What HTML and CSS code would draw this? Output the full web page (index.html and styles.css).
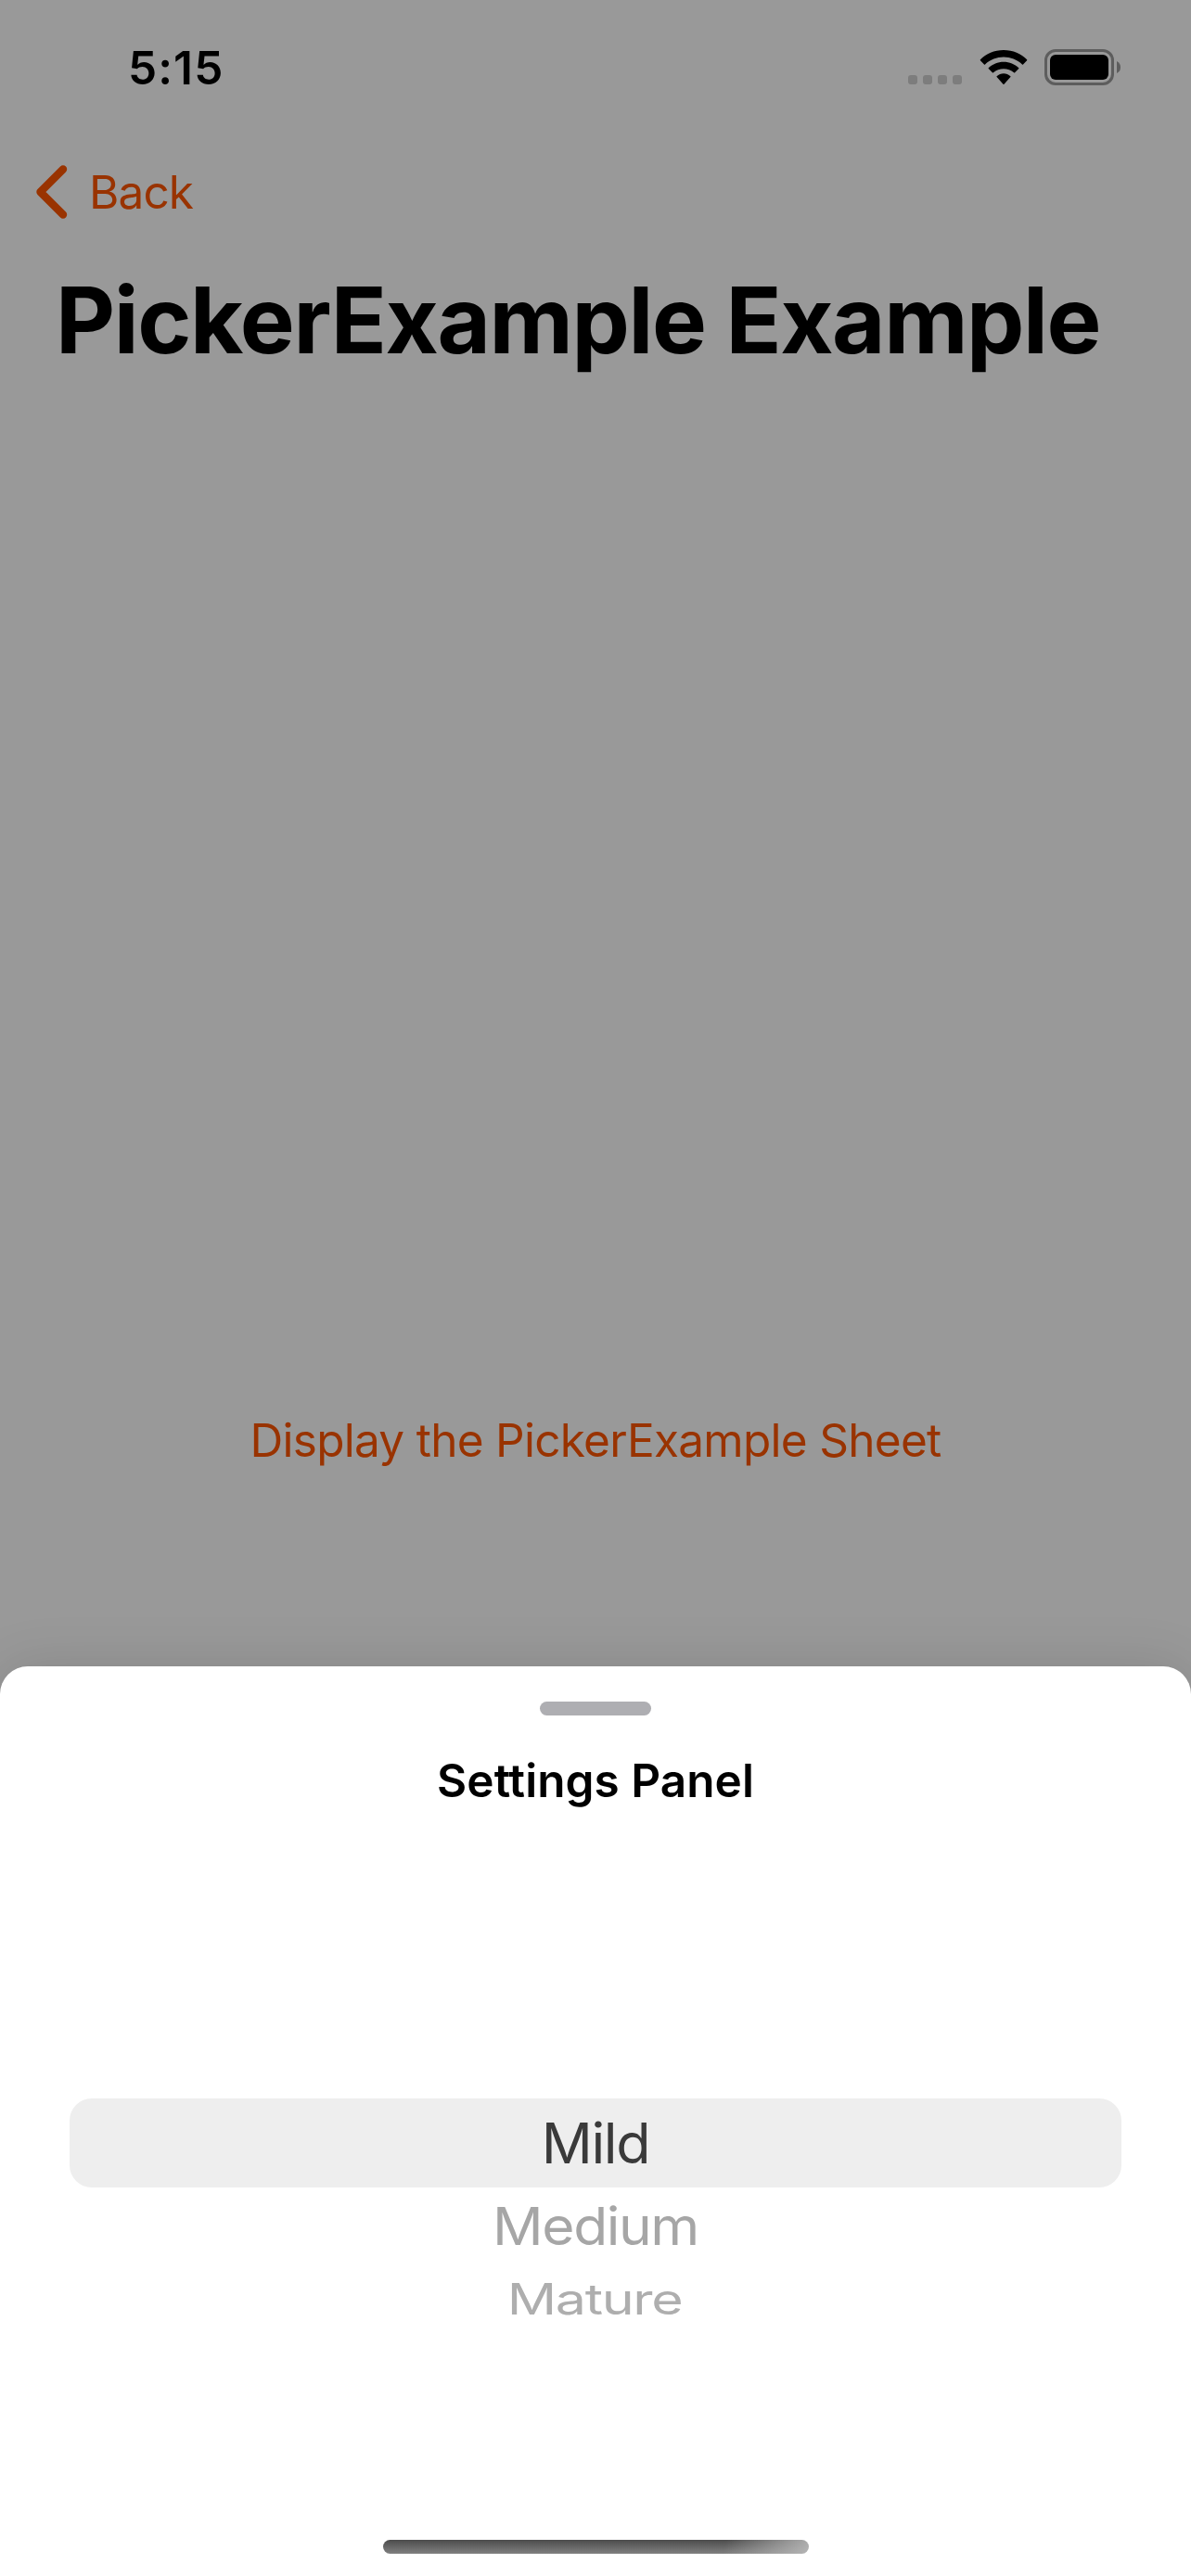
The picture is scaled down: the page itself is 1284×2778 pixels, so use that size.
FILE: index.html
```html
<!DOCTYPE html>
<html lang="en">
<head>
<meta charset="utf-8">
<title>PickerExample Example</title>
<link rel="stylesheet" href="styles.css">
</head>
<body>
<div class="screen">
  <header class="status-bar">
    <span class="time">5:15</span>
    <div class="indicators">
      <div class="signal"><i></i><i></i><i></i><i></i></div>
      <svg class="wifi" width="52" height="38" viewBox="0 0 52 38">
        <path d="M26 0C36 0 45 4 51.100 10.300Q51.500 10.700 51.100 11.200L47 15.400Q46.500 15.900 46 15.400C40.500 10.500 33.500 7.600 26 7.600S11.500 10.500 6 15.400Q5.500 15.900 5 15.400L.900 11.200Q.500 10.700 .900 10.300C7 4 16 0 26 0Z"/>
        <path d="M26 12.700C32.300 12.700 38 15.100 42.300 19.200Q42.700 19.600 42.300 20.100L38.100 24.300Q37.600 24.700 37.100 24.300C34 21.700 30.200 20.300 26 20.300S18 21.700 14.900 24.300Q14.400 24.700 13.900 24.300L9.700 20.100Q9.300 19.600 9.700 19.200C14 15.100 19.700 12.700 26 12.700Z"/>
        <path d="M26 25.300C28.700 25.300 31.300 26.300 33.400 28.200Q33.800 28.600 33.400 29L26.500 36.700Q26 37.200 25.500 36.700L18.600 29Q18.200 28.600 18.600 28.200C20.700 26.300 23.300 25.300 26 25.300Z"/>
      </svg>
      <svg class="battery" width="83" height="39" viewBox="0 0 83 39">
        <rect x="1.500" y="1.500" width="72" height="36" rx="10.500" fill="none" stroke="#5d5d5d" stroke-width="3"/>
        <rect x="6" y="6" width="63" height="27" rx="6"/>
        <path d="M78 13Q82 15 82 19.500T78 26Z" fill="#5d5d5d"/>
      </svg>
    </div>
  </header>
  <nav class="nav-bar">
    <svg class="chevron" width="34" height="58" viewBox="0 0 34 58">
      <path d="M29 4.500L4.500 29L29 53.500" fill="none" stroke="#993300" stroke-width="8.400" stroke-linecap="round" stroke-linejoin="round"/>
    </svg>
    <span class="back">Back</span>
  </nav>
  <h1 class="title">PickerExample Example</h1>
  <main class="content">
    <a class="open-sheet">Display the PickerExample Sheet</a>
  </main>
  <section class="sheet">
    <div class="grabber"></div>
    <h2 class="sheet-title">Settings Panel</h2>
    <div class="picker">
      <div class="option selected">Mild</div>
      <div class="option near">Medium</div>
      <div class="option far">Mature</div>
    </div>
    <div class="home-indicator"></div>
  </section>
</div>
</body>
</html>
```
FILE: styles.css
```css
* { box-sizing: border-box; margin: 0; padding: 0; }

body {
  background: #999;
  color: #000;
  font: 400 49.5px/60px Inter, "Liberation Sans", sans-serif;
}

.screen {
  width: 1284px;
  height: 2778px;
  display: flex;
  flex-direction: column;
  overflow: hidden;
}

.status-bar {
  height: 141px;
  padding: 43px 75px 0 138px;
  display: flex;
  justify-content: space-between;
  align-items: flex-start;
}

.time { font-weight: 600; letter-spacing: 1.1px; }

.indicators { display: flex; align-items: flex-start; padding-top: 10px; }

.signal { display: flex; gap: 6px; padding-top: 28px; margin-right: 18.5px; }
.signal i { width: 10px; height: 10px; border-radius: 3px; background: #7d7d7d; }

.wifi { margin: 1px 18.5px 0 0; }

.nav-bar {
  height: 144px;
  padding: 36px 39px 0;
  display: flex;
  align-items: flex-start;
  gap: 23px;
  color: #930;
}

.chevron { margin-top: 1px; }
.back { letter-spacing: -.9px; }

.title {
  padding-left: 60px;
  font-size: 99px;
  line-height: 120px;
  font-weight: 700;
  letter-spacing: -1.4px;
  white-space: nowrap;
}

.content {
  height: 1392px;
  padding-bottom: 214px;
  display: flex;
  justify-content: center;
  align-items: flex-end;
}

.open-sheet { color: #930; letter-spacing: -.72px; }

.sheet {
  height: 981px;
  padding: 38px 75px 24px;
  display: flex;
  flex-direction: column;
  align-items: center;
  background: #fff;
  border-radius: 30px 30px 0 0;
  box-shadow: 0 0 60px rgba(0, 0, 0, .12);
}

.grabber { width: 120px; height: 15px; border-radius: 8px; background: #aeaeb2; }

.sheet-title {
  margin-top: 40px;
  font-size: 49.5px;
  font-weight: 600;
  letter-spacing: .05px;
}

.picker { width: 100%; margin-top: 313px; }

.option {
  font-size: 61px;
  line-height: 74px;
  letter-spacing: -1.4px;
  text-align: center;
}

.selected {
  height: 96px;
  line-height: 96px;
  border-radius: 24px;
  background: #eee;
  color: #3a3a3a;
}

.near { margin-top: 5px; color: #a6a6a6; transform: scale(.991, .93); }
.far { margin-top: 4px; padding-right: 2px; color: #aeaeae; transform: scale(.97, .755); }

.home-indicator {
  width: 459px;
  height: 15px;
  margin-top: auto;
  border-radius: 8px;
  background:
    linear-gradient(100deg, rgba(190, 190, 190, 0) 80%, rgba(190, 190, 190, .85) 100%),
    linear-gradient(#4c4c4c, #808080);
}
```
